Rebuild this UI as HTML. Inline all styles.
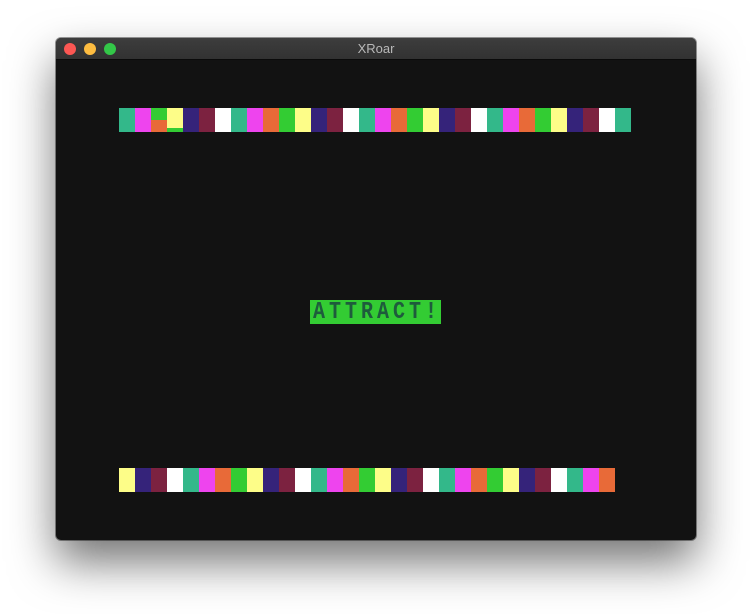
<!DOCTYPE html>
<html><head><meta charset="utf-8"><style>
body{margin:0;width:752px;height:614px;background:#fff;position:relative;overflow:hidden;font-family:"Liberation Sans",sans-serif}
.win{position:absolute;left:56px;top:38px;width:640px;height:502px;background:#121212;border-radius:5px;box-shadow:0 22px 45px rgba(0,0,0,.55),0 0 0 1px rgba(90,90,90,.6);overflow:hidden}
.tb{position:absolute;left:0;top:0;width:640px;height:21px;background:linear-gradient(#3d3d3d,#323232);border-bottom:1px solid #0a0a0a;text-align:center;color:#b8b8b8;font-size:13px;line-height:22px}
.d{position:absolute;top:5px;width:12px;height:12px;border-radius:50%}
.b{position:absolute;height:24px}
.at{position:absolute;left:254px;top:262px;width:131px;height:24px;background:#33cc33;overflow:hidden}
.at span{position:absolute;left:3px;top:1px;color:#1e5c3c;font:bold 20px "Liberation Mono",monospace;line-height:24px;letter-spacing:4px;white-space:nowrap;transform:scaleY(1.2);transform-origin:0 50%}
</style></head><body>
<div class="win">
<div class="tb">XRoar
<div class="d" style="left:8px;background:#fc5753"></div>
<div class="d" style="left:28px;background:#fdbc40"></div>
<div class="d" style="left:48px;background:#33c748"></div>
</div>
<div id="top"></div><div id="bot"></div>
<div class="at"><span>ATTRACT!</span></div>
</div>
<script>
var C={t:'#33b88a',m:'#ee44ee',o:'#e86a38',g:'#33cc33',y:'#fdfd88',n:'#35237a',r:'#7c2240',w:'#ffffff'};
function bar(id,y,x0,seq){var h='';for(var i=0;i<seq.length;i++){h+='<div class="b" style="left:'+(x0-56+i*16)+'px;top:'+(y-38)+'px;width:16px;background:'+C[seq[i]]+'"></div>';}document.getElementById(id).innerHTML=h;}
bar('top',108,119,'tmoynrwtmogynrwtmogynrwtmogynrwt'.split(''));
bar('bot',468,119,'ynrwtmogynrwtmogynrwtmogynrwtmo'.split(''));
var t=document.getElementById('top');
t.innerHTML+='<div class="b" style="left:95px;top:70px;width:16px;height:12px;background:#33cc33"></div><div class="b" style="left:111px;top:90px;width:16px;height:4px;background:#33cc33"></div>';
</script>
</body></html>
